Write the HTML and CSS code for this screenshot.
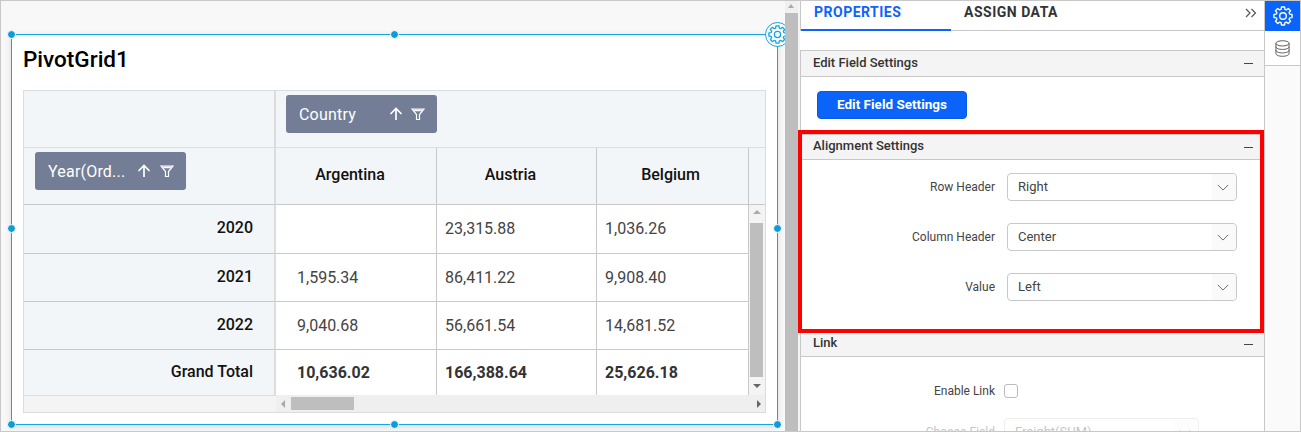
FILE: index.html

```html
<!DOCTYPE html>
<html>
<head>
	<title>PivotGrid properties</title>
	<link rel="stylesheet" href="styles.css">
</head>
<body>
	<svg class="defs" width="0" height="0">
		<symbol id="gear" viewBox="-12 -12 24 24">
			<polygon points="7.31,-2.09 9.85,-1.74 9.85,1.74 7.31,2.09 6.65,3.68 8.19,5.74 5.74,8.19 3.68,6.65 2.09,7.31 1.74,9.85 -1.74,9.85 -2.09,7.31 -3.68,6.65 -5.74,8.19 -8.19,5.74 -6.65,3.68 -7.31,2.09 -9.85,1.74 -9.85,-1.74 -7.31,-2.09 -6.65,-3.68 -8.19,-5.74 -5.74,-8.19 -3.68,-6.65 -2.09,-7.31 -1.74,-9.85 1.74,-9.85 2.09,-7.31 3.68,-6.65 5.74,-8.19 8.19,-5.74 6.65,-3.68" fill="none" stroke="currentColor" stroke-width="1.5" stroke-linejoin="round"/>
			<circle r="3.6" fill="none" stroke="currentColor" stroke-width="1.5"/>
		</symbol>
		<symbol id="sort-up" viewBox="0 0 14 14">
			<path d="M7 13V1.5M1.5 7L7 1.5L12.5 7" fill="none" stroke="currentColor" stroke-width="1.7"/>
		</symbol>
		<symbol id="funnel" viewBox="0 0 14 14">
			<path d="M1 2H13L8.5 7.5V12.5H5.5V7.5Z" fill="none" stroke="currentColor" stroke-width="1.2"/>
			<path d="M2.5 2.5H11.5L10.2 4.2H3.8Z" fill="currentColor"/>
		</symbol>
		<symbol id="chevron" viewBox="0 0 14 8">
			<path d="M1 1L7 7L13 1" fill="none" stroke="currentColor" stroke-width="1"/>
		</symbol>
	</svg>

	<div class="app">
		<div class="canvas">
			<div class="widget">
				<h1 class="grid-title">PivotGrid1</h1>
				<div class="pivot">
					<div class="cell head side"></div>
					<div class="cell head span-top">
						<div class="pill">
							<span class="pill-text">Country</span>
							<svg class="pill-icon"><use href="#sort-up"/></svg>
							<svg class="pill-icon"><use href="#funnel"/></svg>
						</div>
					</div>

					<div class="cell head side">
						<div class="pill wide-gap">
							<span class="pill-text">Year(Ord...</span>
							<svg class="pill-icon"><use href="#sort-up"/></svg>
							<svg class="pill-icon"><use href="#funnel"/></svg>
						</div>
					</div>
					<div class="cell head col-name">Argentina</div>
					<div class="cell head col-name">Austria</div>
					<div class="cell head col-name last-col">Belgium</div>
					<div class="cell head end"></div>

					<div class="cell side row-name">2020</div>
					<div class="cell val first"></div>
					<div class="cell val">23,315.88</div>
					<div class="cell val">1,036.26</div>
					<div class="vscroll">
						<span class="arrow-up"></span>
						<span class="vthumb"></span>
						<span class="arrow-down"></span>
					</div>

					<div class="cell side row-name">2021</div>
					<div class="cell val first">1,595.34</div>
					<div class="cell val">86,411.22</div>
					<div class="cell val">9,908.40</div>

					<div class="cell side row-name">2022</div>
					<div class="cell val first">9,040.68</div>
					<div class="cell val">56,661.54</div>
					<div class="cell val">14,681.52</div>

					<div class="cell side row-name total-name">Grand Total</div>
					<div class="cell val first total">10,636.02</div>
					<div class="cell val total">166,388.64</div>
					<div class="cell val total">25,626.18</div>

					<div class="corner"></div>
					<div class="hscroll">
						<span class="arrow-left"></span>
						<span class="hthumb"></span>
						<span class="arrow-right"></span>
					</div>
				</div>

				<span class="handle h-tl"></span>
				<span class="handle h-tm"></span>
				<span class="handle h-ml"></span>
				<span class="handle h-mr"></span>
				<span class="handle h-bl"></span>
				<span class="handle h-bm"></span>
				<span class="handle h-br"></span>
				<span class="gear-badge"><svg class="gear-badge-icon"><use href="#gear"/></svg></span>
			</div>
		</div>

		<div class="page-scroll">
			<span class="page-arrow"></span>
			<span class="page-thumb"></span>
		</div>

		<div class="panel">
			<div class="tabs">
				<div class="tab active">PROPERTIES</div>
				<div class="tab">ASSIGN DATA</div>
				<svg class="collapse" viewBox="0 0 12 10"><path d="M1 1L5 5L1 9M6.5 1L10.5 5L6.5 9" fill="none" stroke="#555" stroke-width="1.2"/></svg>
			</div>

			<div class="section first-section">
				<span>Edit Field Settings</span><i class="minus"></i>
			</div>
			<div class="edit-body">
				<button class="edit-btn">Edit Field Settings</button>
			</div>

			<div class="section">
				<span>Alignment Settings</span><i class="minus"></i>
			</div>
			<div class="align-body">
				<div class="field">
					<label class="field-label">Row Header</label>
					<div class="select"><span class="select-text">Right</span><span class="select-arrow"><svg class="chev"><use href="#chevron"/></svg></span></div>
				</div>
				<div class="field">
					<label class="field-label">Column Header</label>
					<div class="select"><span class="select-text">Center</span><span class="select-arrow"><svg class="chev"><use href="#chevron"/></svg></span></div>
				</div>
				<div class="field">
					<label class="field-label">Value</label>
					<div class="select"><span class="select-text">Left</span><span class="select-arrow"><svg class="chev"><use href="#chevron"/></svg></span></div>
				</div>
			</div>

			<div class="section">
				<span>Link</span><i class="minus"></i>
			</div>
			<div class="link-body">
				<div class="field link-field">
					<label class="field-label">Enable Link</label>
					<span class="checkbox"></span>
				</div>
				<div class="field link-field disabled">
					<label class="field-label">Choose Field</label>
					<div class="select small"><span class="select-text">Freight(SUM)</span><span class="select-arrow"><svg class="chev"><use href="#chevron"/></svg></span></div>
				</div>
			</div>
		</div>

		<div class="strip">
			<div class="strip-btn on"><svg class="strip-gear"><use href="#gear"/></svg></div>
			<div class="strip-btn">
				<svg class="db" viewBox="0 0 16 18"><g fill="none" stroke="#555" stroke-width="1"><ellipse cx="8" cy="3.5" rx="7" ry="2.8"/><path d="M1 3.5V14.5C1 16 4 17.3 8 17.3S15 16 15 14.5V3.5"/><path d="M1 7.2C1 8.7 4 10 8 10S15 8.7 15 7.2"/><path d="M1 10.9C1 12.4 4 13.7 8 13.7S15 12.4 15 10.9"/></g></svg>
			</div>
		</div>

		<div class="callout"></div>
	</div>
</body>
</html>
```

FILE: styles.css

```css
* {box-sizing: border-box;}

body {margin: 0;
	  font-family: Roboto, sans-serif;
	  background: #fff;}

.defs {position: absolute;}

.app {position: relative;
	  display: flex;
	  width: 1301px;
	  height: 432px;
	  overflow: hidden;
	  border: 1px solid #c8c8c8;}

/* designer surface */
.canvas {width: 784px;
		 flex: none;
		 padding: 33px 0 0 10px;
		 background: #f8f8f8;
		 overflow: hidden;}

.widget {position: relative;
		 width: 767px;
		 height: 391px;
		 padding: 0 11px;
		 background: #fff;
		 border: 1px solid #14a6e2;
		 box-shadow: 0 2px 6px rgba(0, 0, 0, .12);}

.grid-title {margin: 0;
			 height: 55px;
			 line-height: 48px;
			 font-size: 22.5px;
			 font-weight: 500;
			 color: #000;}

.pivot {display: grid;
		grid-template-columns: 252px 161px 160px 152px 16px;
		grid-template-rows: 57px 57px 49px 48px 48px 45px 17px;
		width: 743px;
		border: 1px solid #dcdcdc;}

.cell {border-bottom: 1px solid #c8c8c8;
	   border-right: 1px solid #c8c8c8;
	   font-size: 16px;}

.head {background: #f3f6f9;}
.side {background: #f3f6f9;
	   border-right: 2px solid #dcdcdc;}
.span-top {grid-column: 2 / 6;
		   border-right: 0;
		   border-bottom-color: #dcdcdc;}
.side:first-child {border-bottom-color: #dcdcdc;}
.end {border-right: 0;}

.col-name {display: flex;
		   align-items: center;
		   justify-content: center;
		   padding: 0 12px 4px 0;
		   font-weight: 500;
		   color: #111;}
.last-col {padding-right: 4px;}

.row-name {padding-right: 21px;
		   line-height: 45px;
		   text-align: right;
		   font-weight: 500;
		   color: #111;}

.total-name {line-height: 43px;
			 border-bottom: 0;}

.val {padding-left: 8px;
	  line-height: 48px;
	  color: #444;
	  font-size: 16px;}
.first {padding-left: 21px;}
.total {font-weight: 700;
		color: #333;
		border-bottom: 0;
		line-height: 45px;}

.pill {display: flex;
	   align-items: center;
	   width: 151px;
	   height: 38px;
	   margin: 4px 0 0 10px;
	   padding: 0 12px 0 13px;
	   background: #737e96;
	   border-radius: 3px;
	   color: #fff;}
.side .pill {margin-left: 11px;}

.pill-text {flex: 1;
			font-size: 16px;
			letter-spacing: .2px;}

.pill-icon {width: 14px;
			height: 14px;
			margin-left: 8px;}
.wide-gap .pill-icon:last-child {margin-left: 9px;}

/* grid scrollbars */
.vscroll {grid-column: 5;
		  grid-row: 3 / 7;
		  position: relative;
		  background: #f4f4f4;}
.vthumb {position: absolute;
		 left: 1px;
		 top: 18px;
		 width: 13px;
		 height: 154px;
		 background: #bebebe;}
.arrow-up {position: absolute;
		   left: 4px;
		   top: 5px;
		   border: 4px solid transparent;
		   border-top: 0;
		   border-bottom: 4px solid #aaa;}
.arrow-down {position: absolute;
			 left: 4px;
			 bottom: 7px;
			 border: 4px solid transparent;
			 border-bottom: 0;
			 border-top: 4px solid #666;}

.corner {background: #f4f4f4;
		 border-top: 1px solid #dcdcdc;}
.hscroll {grid-column: 2 / 6;
		  position: relative;
		  background: #efefef;}
.hthumb {position: absolute;
		 left: 15px;
		 top: 2px;
		 width: 63px;
		 height: 13px;
		 background: #bebebe;}
.arrow-left {position: absolute;
			 left: 5px;
			 top: 5px;
			 border: 4px solid transparent;
			 border-left: 0;
			 border-right: 4px solid #aaa;}
.arrow-right {position: absolute;
			  right: 4px;
			  top: 5px;
			  border: 4px solid transparent;
			  border-right: 0;
			  border-left: 4px solid #666;}

/* selection handles */
.handle {position: absolute;
		 width: 9px;
		 height: 9px;
		 background: #0f9ad8;
		 border: 1px solid #fff;
		 border-radius: 50%;}
.h-tl {left: -5px; top: -5px;}
.h-tm {left: 378px; top: -5px;}
.h-ml {left: -5px; top: 189px;}
.h-mr {right: -5px; top: 189px;}
.h-bl {left: -5px; bottom: -5px;}
.h-bm {left: 378px; bottom: -5px;}
.h-br {right: -5px; bottom: -5px;}

.gear-badge {position: absolute;
			 right: -13px;
			 top: -13px;
			 width: 25px;
			 height: 25px;
			 padding: 1px;
			 background: #fff;
			 border: 1px solid #14a6e2;
			 border-radius: 50%;
			 color: #14a6e2;}
.gear-badge-icon {display: block;
				  width: 21px;
				  height: 21px;}

.page-scroll {position: relative;
			  width: 13px;
			  flex: none;
			  background: #f0f0f0;}
.page-arrow {position: absolute;
			 left: 3px;
			 top: 3px;
			 border: 3.5px solid transparent;
			 border-top: 0;
			 border-bottom: 4px solid #aaa;}
.page-thumb {position: absolute;
			 left: 0;
			 top: 12px;
			 bottom: 0;
			 width: 13px;
			 background: #bebebe;}

/* properties panel */
.panel {width: 466px;
		flex: none;
		padding-left: 2px;
		background: linear-gradient(to right, #f4f4f4 2px, transparent 2px);
		overflow: hidden;}
.panel > * {border-left: 1px solid #c8c8c8;}

.tabs {position: relative;
	   display: flex;
	   height: 30px;
	   background: #fff;
	   border-bottom: 1px solid #c8c8c8;}

.tab {width: 150px;
	  height: 30px;
	  padding: 3px 0 0 13px;
	  font-size: 14px;
	  line-height: 17px;
	  font-weight: 700;
	  letter-spacing: .5px;
	  color: #333;}
.tab.active {color: #0f62fe;
			 border-bottom: 2px solid #0f62fe;}

.collapse {position: absolute;
		   left: 444px;
		   top: 7px;
		   width: 12px;
		   height: 10px;}

.section {display: flex;
		  align-items: center;
		  justify-content: space-between;
		  height: 26px;
		  padding: 0 11px 3px 12px;
		  background: #f4f4f4;
		  border-top: 1px solid #c8c8c8;
		  border-bottom: 1px solid #c8c8c8;
		  font-size: 13px;
		  font-weight: 500;
		  color: #333;}
.first-section {margin-top: 19px;
				height: 27px;}

.minus {width: 9px;
		height: 1px;
		margin-top: 3px;
		background: #444;}

.edit-body {height: 57px;
			padding: 14px 0 0 16px;
			background: #fff;}

.edit-btn {width: 150px;
		   height: 28px;
		   padding: 0 0 2px;
		   background: #0a64fa;
		   border: 1px solid #0a5ae0;
		   border-radius: 4px;
		   color: #fff;
		   font-family: Roboto, sans-serif;
		   font-size: 13.5px;
		   font-weight: 700;}

.align-body {height: 171px;
			 padding-top: 13px;
			 background: #fff;}

.field {display: flex;
		align-items: center;
		height: 28px;
		margin-bottom: 22px;}

.field-label {width: 194px;
			  margin-right: 12px;
			  padding-bottom: 1px;
			  text-align: right;
			  font-size: 12px;
			  color: #444;}

.select {display: flex;
		 width: 230px;
		 height: 28px;
		 background: #fff;
		 border: 1px solid #c8c8c8;
		 border-radius: 4px;}
.select-text {flex: 1;
			  padding-left: 10px;
			  line-height: 26px;
			  font-size: 13px;
			  color: #444;}
.select-arrow {display: flex;
			   align-items: center;
			   justify-content: center;
			   width: 24px;
			   padding-right: 3px;
			   background: #fafafa;
			   border-radius: 0 4px 4px 0;
			   color: #555;}
.chev {width: 12px;
	   height: 7px;}

.link-body {height: 80px;
			padding-top: 20px;
			background: #fff;}
.link-field {margin-bottom: 13px;}
.link-field .field-label {margin-right: 9px;
						  padding-bottom: 0;}

.checkbox {width: 14px;
		   height: 14px;
		   border: 1px solid #bbb;
		   border-radius: 3px;}

.disabled {opacity: .3;}
.small {width: 195px;}

/* right strip */
.strip {width: 36px;
		flex: none;
		background: #fafafa;
		border-left: 1px solid #c8c8c8;}
.strip-btn {display: flex;
			align-items: center;
			justify-content: center;
			height: 35px;
			background: #fff;
			border-bottom: 1px solid #c8c8c8;}
.strip-btn.on {height: 30px;
			   background: #0a64fa;
			   border-bottom: 0;
			   color: #fff;}
.strip-gear {width: 22px;
			 height: 22px;}
.db {width: 15px;
	 height: 17px;}

/* red annotation box */
.callout {position: absolute;
		  left: 797px;
		  top: 129px;
		  width: 466px;
		  height: 203px;
		  border: 4px solid #f00;}
```
